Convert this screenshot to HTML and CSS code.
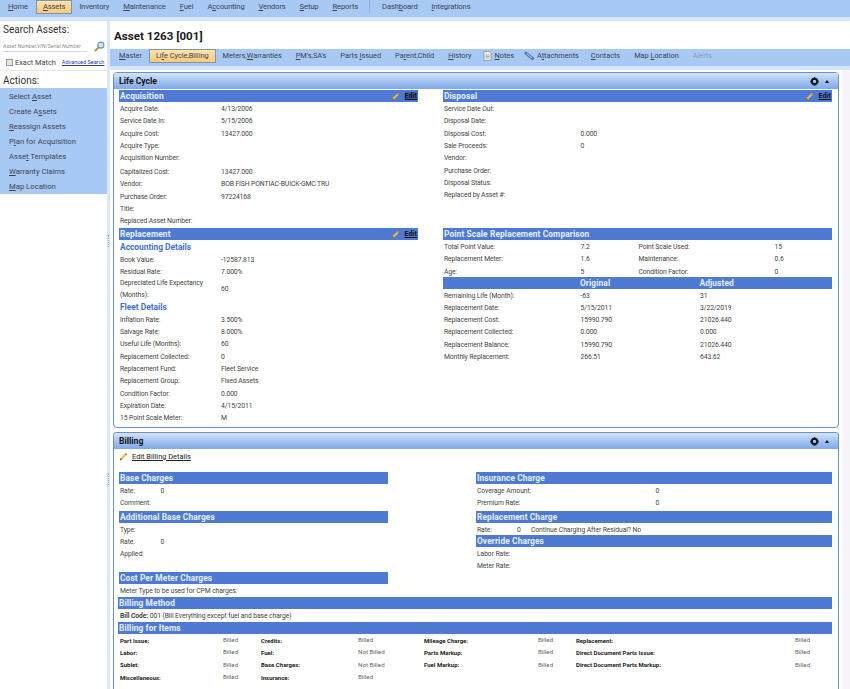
FILE: index.html
```html
<!DOCTYPE html>
<html lang="en">
<head>
    <meta charset="UTF-8">
    <title>Asset 1263 [001]</title>
    <link rel="stylesheet" href="styles.css">
</head>
<body>
    <svg class="defs" width="0" height="0">
        <symbol id="pencil" viewBox="0 0 10 10">
            <path d="M1 9.4l.7-2.6L7.6 1l1.6 1.5-5.8 5.9z" fill="#f0b840"/>
            <path d="M7.6 1l1.6 1.5-1 1L6.6 2z" fill="#d9694a"/>
            <path d="M1 9.4l.7-2.6 1.7 1.6z" fill="#6b5a3a"/>
        </symbol>
        <symbol id="gear" viewBox="0 0 10 10">
            <circle cx="5" cy="5" r="2.9" fill="none" stroke="#111" stroke-width="1.9"/>
            <path d="M4 .4h2v1.6H4zM4 8h2v1.6H4zM.4 4h1.6v2H.4zM8 4h1.6v2H8z" fill="#111"/>
            <path d="M1.4 2.6l1.2-1.2 1 1-1.2 1.2zM7.4 8.6l1.2-1.2-1-1-1.2 1.2zM8.6 2.6L7.4 1.4l-1 1 1.2 1.2zM2.6 8.6L1.4 7.4l1-1 1.2 1.2z" fill="#111"/>
        </symbol>
    </svg>

    <div class="topnav">
        <a><u>H</u>ome</a>
        <a class="on"><u>A</u>ssets</a>
        <a>Inventory</a>
        <a><u>M</u>aintenance</a>
        <a><u>F</u>uel</a>
        <a>A<u>c</u>counting</a>
        <a><u>V</u>endors</a>
        <a><u>S</u>etup</a>
        <a><u>R</u>eports</a>
        <span class="nav-sep"></span>
        <a>Dash<u>b</u>oard</a>
        <a><u>I</u>ntegrations</a>
    </div>

    <div class="page">
        <div class="sidebar">
            <h3 class="side-title">Search Assets:</h3>
            <div class="search-row">
                <input class="search-input" type="text" placeholder="Asset Number,VIN/Serial Number">
                <svg class="search-icon" viewBox="0 0 12 12" width="11" height="11">
                    <circle cx="7.5" cy="4.5" r="3.3" fill="#cfe3f7" stroke="#6c93b8" stroke-width="1.2"/>
                    <path d="M5 7L1.5 10.5" stroke="#b98a35" stroke-width="2" stroke-linecap="round"/>
                </svg>
            </div>
            <div class="match-row">
                <span class="checkbox"></span>
                <span>Exact Match</span>
                <a class="adv-link">Advanced Search</a>
            </div>
            <h3 class="side-title actions-title">Actions:</h3>
            <ul class="actions">
                <li>Select <u>A</u>sset</li>
                <li>Create A<u>s</u>sets</li>
                <li><u>R</u>eassign Assets</li>
                <li>P<u>l</u>an for Acquisition</li>
                <li>Asse<u>t</u> Templates</li>
                <li><u>W</u>arranty Claims</li>
                <li><u>M</u>ap Location</li>
            </ul>
        </div>

        <div class="splitter">
            <div class="grip"></div>
            <div class="grip"></div>
        </div>

        <div class="main">
            <h1 class="asset-title">Asset 1263 [001]</h1>

            <div class="tabs">
                <a><u>M</u>aster</a>
                <a class="on">Li<u>f</u>e Cycle,Billing</a>
                <a>Meters,<u>W</u>arranties</a>
                <a><u>P</u>M's,SA's</a>
                <a>Parts <u>I</u>ssued</a>
                <a>Pa<u>r</u>ent,Child</a>
                <a><u>H</u>istory</a>
                <a class="with-icon">
                    <svg viewBox="0 0 9 10" width="9" height="10"><path d="M1 .5h5l2 2v7H1z" fill="#f4f4ee" stroke="#8a8f99" stroke-width=".8"/><path d="M2.5 4h4M2.5 5.5h4M2.5 7h4" stroke="#7b8aa0" stroke-width=".7"/></svg>
                    <span><u>N</u>otes</span>
                </a>
                <a class="with-icon">
                    <svg viewBox="0 0 11 10" width="11" height="10"><path d="M2 2.2l6.6 5.2" stroke="#4f7fb5" stroke-width="3.2" stroke-linecap="round"/><path d="M2.6 2.7l5.4 4.2" stroke="#b9d0ea" stroke-width="1"/></svg>
                    <span>A<u>t</u>tachments</span>
                </a>
                <a><u>C</u>ontacts</a>
                <a>Map <u>L</u>ocation</a>
                <a class="disabled">Alerts</a>
            </div>

            <div class="panels">
                <div class="panel lifecycle">
                    <div class="panel-head">
                        <span>Life Cycle</span>
                        <svg class="gear"><use href="#gear"/></svg>
                        <span class="caret"></span>
                    </div>
                    <div class="life-grid">
                        <div class="life-left">
                            <div class="bar">Acquisition
                                <span class="bar-edit"><svg><use href="#pencil"/></svg><a class="boxed">Edit</a></span>
                            </div>
                            <div class="row"><span>Acquire Date:</span><span>4/13/2006</span></div>
                            <div class="row"><span>Service Date In:</span><span>5/15/2006</span></div>
                            <div class="row"><span>Acquire Cost:</span><span>13427.000</span></div>
                            <div class="row"><span>Acquire Type:</span><span></span></div>
                            <div class="row"><span>Acquisition Number:</span><span></span></div>
                            <div class="row gap-top"><span>Capitalized Cost:</span><span>13427.000</span></div>
                            <div class="row"><span>Vendor:</span><span>BOB FISH PONTIAC-BUICK-GMC TRU</span></div>
                            <div class="row"><span>Purchase Order:</span><span>97224168</span></div>
                            <div class="row"><span>Title:</span><span></span></div>
                            <div class="row"><span>Replaced Asset Number:</span><span></span></div>
                        </div>
                        <div class="life-right">
                            <div class="bar">Disposal
                                <span class="bar-edit"><svg><use href="#pencil"/></svg><a>Edit</a></span>
                            </div>
                            <div class="row"><span>Service Date Out:</span><span></span></div>
                            <div class="row"><span>Disposal Date:</span><span></span></div>
                            <div class="row"><span>Disposal Cost:</span><span>0.000</span></div>
                            <div class="row"><span>Sale Proceeds:</span><span>0</span></div>
                            <div class="row"><span>Vendor:</span><span></span></div>
                            <div class="row"><span>Purchase Order:</span><span></span></div>
                            <div class="row"><span>Disposal Status:</span><span></span></div>
                            <div class="row"><span>Replaced by Asset #:</span><span></span></div>
                        </div>
                        <div class="life-left">
                            <div class="bar">Replacement
                                <span class="bar-edit"><svg><use href="#pencil"/></svg><a>Edit</a></span>
                            </div>
                            <div class="subhead">Accounting Details</div>
                            <div class="row"><span>Book Value:</span><span>-12587.813</span></div>
                            <div class="row"><span>Residual Rate:</span><span>7.000%</span></div>
                            <div class="row tall"><span>Depreciated Life Expectancy (Months):</span><span>60</span></div>
                            <div class="subhead">Fleet Details</div>
                            <div class="row"><span>Inflation Rate:</span><span>3.500%</span></div>
                            <div class="row"><span>Salvage Rate:</span><span>8.000%</span></div>
                            <div class="row"><span>Useful Life (Months):</span><span>60</span></div>
                            <div class="row"><span>Replacement Collected:</span><span>0</span></div>
                            <div class="row"><span>Replacement Fund:</span><span>Fleet Service</span></div>
                            <div class="row"><span>Replacement Group:</span><span>Fixed Assets</span></div>
                            <div class="row"><span>Condition Factor:</span><span>0.000</span></div>
                            <div class="row"><span>Expiration Date:</span><span>4/15/2011</span></div>
                            <div class="row"><span>15 Point Scale Meter:</span><span>M</span></div>
                        </div>
                        <div class="life-right">
                            <div class="bar">Point Scale Replacement Comparison</div>
                            <div class="row four"><span>Total Point Value:</span><span>7.2</span><span>Point Scale Used:</span><span>15</span></div>
                            <div class="row four"><span>Replacement Meter:</span><span>1.6</span><span>Maintenance:</span><span>0.6</span></div>
                            <div class="row four"><span>Age:</span><span>5</span><span>Condition Factor:</span><span>0</span></div>
                            <div class="bar three"><span></span><span>Original</span><span>Adjusted</span></div>
                            <div class="row three"><span>Remaining Life (Month):</span><span>-63</span><span>31</span></div>
                            <div class="row three"><span>Replacement Date:</span><span>5/15/2011</span><span>3/22/2019</span></div>
                            <div class="row three"><span>Replacement Cost:</span><span>15990.790</span><span>21026.440</span></div>
                            <div class="row three"><span>Replacement Collected:</span><span>0.000</span><span>0.000</span></div>
                            <div class="row three"><span>Replacement Balance:</span><span>15990.790</span><span>21026.440</span></div>
                            <div class="row three"><span>Monthly Replacement:</span><span>266.51</span><span>643.62</span></div>
                        </div>
                    </div>
                </div>

                <div class="panel billing">
                    <div class="panel-head">
                        <span>Billing</span>
                        <svg class="gear"><use href="#gear"/></svg>
                        <span class="caret"></span>
                    </div>
                    <div class="edit-billing"><svg><use href="#pencil"/></svg><a>Edit Billing Details</a></div>
                    <div class="bill-grid">
                        <div class="bill-left">
                            <div class="bar">Base Charges</div>
                            <div class="row narrow"><span>Rate:</span><span>0</span></div>
                            <div class="row narrow"><span>Comment:</span><span></span></div>
                            <div class="bar sec">Additional Base Charges</div>
                            <div class="row narrow"><span>Type:</span><span></span></div>
                            <div class="row narrow"><span>Rate:</span><span>0</span></div>
                            <div class="row narrow"><span>Applied:</span><span></span></div>
                            <div class="bar cpm">Cost Per Meter Charges</div>
                            <div class="row single"><span>Meter Type to be used for CPM charges:</span></div>
                        </div>
                        <div class="bill-right">
                            <div class="bar">Insurance Charge</div>
                            <div class="row wide"><span>Coverage Amount:</span><span>0</span></div>
                            <div class="row wide"><span>Premium Rate:</span><span>0</span></div>
                            <div class="bar sec">Replacement Charge</div>
                            <div class="row charge"><span>Rate:</span><span>0</span><span>Continue Charging After Residual? No</span></div>
                            <div class="bar tight">Override Charges</div>
                            <div class="row wide"><span>Labor Rate:</span><span></span></div>
                            <div class="row wide"><span>Meter Rate:</span><span></span></div>
                        </div>
                    </div>
                    <div class="bar full">Billing Method</div>
                    <div class="row single code"><b>Bill Code:</b> 001 (Bill Everything except fuel and base charge)</div>
                    <div class="bar full">Billing for Items</div>
                    <div class="items">
                        <b>Part Issue:</b><span>Billed</span><b>Credits:</b><span>Billed</span><b>Mileage Charge:</b><span>Billed</span><b>Replacement:</b><span>Billed</span>
                        <b>Labor:</b><span>Billed</span><b>Fuel:</b><span>Not Billed</span><b>Parts Markup:</b><span>Billed</span><b>Direct Document Parts Issue:</b><span>Billed</span>
                        <b>Sublet:</b><span>Billed</span><b>Base Charges:</b><span>Not Billed</span><b>Fuel Markup:</b><span>Billed</span><b>Direct Document Parts Markup:</b><span>Billed</span>
                        <b>Miscellaneous:</b><span>Billed</span><b>Insurance:</b><span>Billed</span>
                    </div>
                </div>
            </div>
        </div>
    </div>
</body>
</html>
```

FILE: styles.css
```css
* {
    margin: 0;
    padding: 0;
    box-sizing: border-box;
}

body {
    width: 850px;
    height: 689px;
    overflow: hidden;
    background: #fff;
    color: #444;
    font-family: Roboto, "Liberation Sans", sans-serif;
    font-size: 6.8px;
}

.defs {
    position: absolute;
}

/* top menu */
.topnav {
    display: flex;
    align-items: center;
    height: 21px;
    padding: 0 0 4px 1px;
    background: #a9c9f5;
    border-bottom: 4px solid #d6e5fa;
    color: #3a4350;
    font-size: 7.6px;
    letter-spacing: -.13px;
    white-space: nowrap;
}

.topnav a {
    padding: 0 7px;
    height: 14px;
    line-height: 14px;
}

.topnav a.on {
    margin-left: 1px;
    padding: 0 6px;
    line-height: 12px;
    background: linear-gradient(#fde4b0, #fbc878);
    border: 1px solid #7f93ad;
}

.nav-sep {
    width: 1px;
    height: 14px;
    margin: 0 5px 0 4px;
    background: #94b4e0;
}

.page {
    display: flex;
    height: 668px;
}

/* left side */
.sidebar {
    width: 107px;
    height: 439px;
    white-space: nowrap;
}

.side-title {
    padding-left: 3px;
    font-size: 10px;
    font-weight: 400;
    line-height: 14px;
    color: #333;
}

.sidebar > .side-title:first-child {
    margin-top: 2px;
}

.search-row {
    display: flex;
    align-items: center;
    gap: 7px;
    padding: 4px 0 0 3px;
}

.search-input {
    width: 84px;
    height: 10px;
    border: 0;
    border-bottom: 1px solid #d5d9e0;
    background: #fff;
    font: italic 5.4px Roboto, sans-serif;
    color: #888;
    outline: none;
}

.search-input::placeholder {
    color: #8d8d8d;
}

.match-row {
    display: flex;
    align-items: center;
    height: 13px;
    margin-top: 3.5px;
    padding-left: 6px;
    font-size: 7.4px;
    color: #444;
}

.checkbox {
    width: 7px;
    height: 7px;
    margin-right: 2px;
    border: 1px solid #9a9a9a;
    background: #e4e4e4;
}

.adv-link {
    margin-left: 6px;
    font-size: 5.5px;
    color: #2a3fa0;
    text-decoration: underline;
}

.actions-title {
    height: 18px;
    margin-top: 1px;
    padding-top: 3px;
    border-top: 1px solid #e2e6ec;
}

.actions {
    height: 106px;
    padding: 1px 0 0 9px;
    list-style: none;
    background: #a9c9f5;
    color: #3a4350;
    font-size: 7.7px;
}

.actions li {
    height: 15px;
    line-height: 15px;
}

.splitter {
    width: 3px;
    background: #dbe7f7;
}

.grip {
    width: 1px;
    height: 12px;
    margin-left: 1px;
    border-left: 1px dotted #8fa9cb;
}

.grip:first-child {
    margin-top: 214px;
}

.grip + .grip {
    margin-top: 226px;
}

/* main area */
.main {
    width: 740px;
}

.asset-title {
    height: 28px;
    padding: 7px 0 0 4px;
    font-size: 11.6px;
    line-height: 16px;
    color: #1b1b1b;
}

.tabs {
    display: flex;
    align-items: center;
    height: 21px;
    padding: 0 0 4px 2px;
    background: #a9c9f5;
    border-bottom: 4px solid #d6e5fa;
    color: #3a4350;
    font-size: 7.4px;
    letter-spacing: -.04px;
    white-space: nowrap;
}

.tabs a {
    display: block;
    height: 14px;
    padding: 0 7px;
    line-height: 14px;
}

.tabs a.with-icon {
    display: flex;
    align-items: center;
    gap: 2px;
    padding: 0 5px;
}

.tabs a.on {
    padding: 0 6px;
    line-height: 12px;
    background: linear-gradient(#fde4b0, #fbc878);
    border: 1px solid #7f93ad;
}

.tabs a.disabled {
    color: #8b9bb0;
}

/* panels */
.panels {
    height: 619px;
    padding: 2px 3px 0;
    border-right: 8px solid #f6f3f9;
}

.panel {
    background: #fff;
    border: 1px solid #6f8fbd;
    border-radius: 4px;
}

.lifecycle {
    height: 356px;
}

.billing {
    height: 262px;
    margin-top: 4px;
    border-bottom: 0;
}

.panel-head {
    display: flex;
    align-items: center;
    height: 16px;
    padding: 0 9px 0 5px;
    background: linear-gradient(#d4e3f9, #a9c7f3 45%, #7ea9ea);
    border-radius: 3px 3px 0 0;
    font-size: 8.6px;
    font-weight: 700;
    color: #111;
}

.gear {
    width: 9px;
    height: 9px;
    margin-left: auto;
}

.caret {
    width: 0;
    height: 0;
    margin-left: 6px;
    border: 2.5px solid transparent;
    border-top: 0;
    border-bottom: 3px solid #111;
}

.bar {
    display: flex;
    align-items: center;
    height: 12px;
    padding-left: 1px;
    background: #4e7ad3;
    color: #e8effb;
    font-size: 8.4px;
    font-weight: 700;
    letter-spacing: .1px;
}

.bar-edit {
    display: flex;
    align-items: center;
    gap: 5px;
    margin-left: auto;
    padding-right: 1px;
    color: #111;
    font-size: 7px;
    text-decoration: underline;
}

.bar-edit svg {
    width: 9px;
    height: 9px;
}

.boxed {
    background: #3e5fa8;
}

.subhead {
    height: 12.5px;
    padding-left: 1px;
    color: #3f72cf;
    font-size: 8.4px;
    font-weight: 700;
    line-height: 13px;
}

.row {
    display: grid;
    grid-template-columns: 101px 1fr;
    align-items: center;
    height: 12.3px;
    padding-left: 1px;
    letter-spacing: -.1px;
}

.gap-top {
    margin-top: 1.4px;
}

.tall {
    height: 23px;
    line-height: 11.4px;
}

.tall span:first-child {
    width: 92px;
}

.life-grid {
    display: grid;
    grid-template-columns: 299px 389px;
    grid-template-rows: 138px auto;
    column-gap: 25px;
    padding: 1px 0 0 5px;
}

.life-grid .bar:first-child {
    margin-bottom: 1px;
}

.life-right .row {
    grid-template-columns: 136.5px 1fr;
}

.life-right .row.four {
    grid-template-columns: 136.5px 58px 136px 1fr;
}

.life-right .row.three {
    grid-template-columns: 136.5px 119.5px 1fr;
}

.bar.three {
    display: grid;
    grid-template-columns: 136px 119.5px 1fr;
    height: 11.5px;
    margin: -.5px 0 .5px;
}

/* billing */
.edit-billing {
    display: flex;
    align-items: center;
    gap: 4px;
    height: 15px;
    padding-left: 5px;
    color: #222;
    font-size: 7.4px;
    text-decoration: underline;
}

.edit-billing svg {
    width: 9px;
    height: 9px;
}

.bill-grid {
    display: flex;
    height: 133px;
    padding: 8px 0 0 5px;
}

.bill-grid .bar {
    margin-bottom: .5px;
}

.bill-left {
    width: 269px;
    margin-right: 88px;
}

.bill-right {
    width: 356px;
}

.row.narrow {
    grid-template-columns: 40.5px 1fr;
}

.row.wide {
    grid-template-columns: 178.5px 1fr;
}

.row.charge {
    grid-template-columns: 40px 14px 1fr;
}

.row.single {
    display: block;
    line-height: 12.3px;
}

.bar.sec {
    margin-top: 2px;
}

.bar.tight {
    margin-top: -.5px;
}

.bar.cpm {
    margin-top: 12px;
}

.full {
    width: 714px;
    margin-left: 4px;
}

.row.code {
    height: 13px;
    padding-left: 6px;
    line-height: 15px;
}

.items {
    display: grid;
    grid-template-columns: 103px 38px 97px 66px 114px 38px 219px 1fr;
    grid-auto-rows: 12.3px;
    align-items: center;
    padding-left: 6px;
    font-size: 6.2px;
}

.items b {
    font-size: 6px;
    color: #222;
}

.items span {
    color: #666;
}
```
